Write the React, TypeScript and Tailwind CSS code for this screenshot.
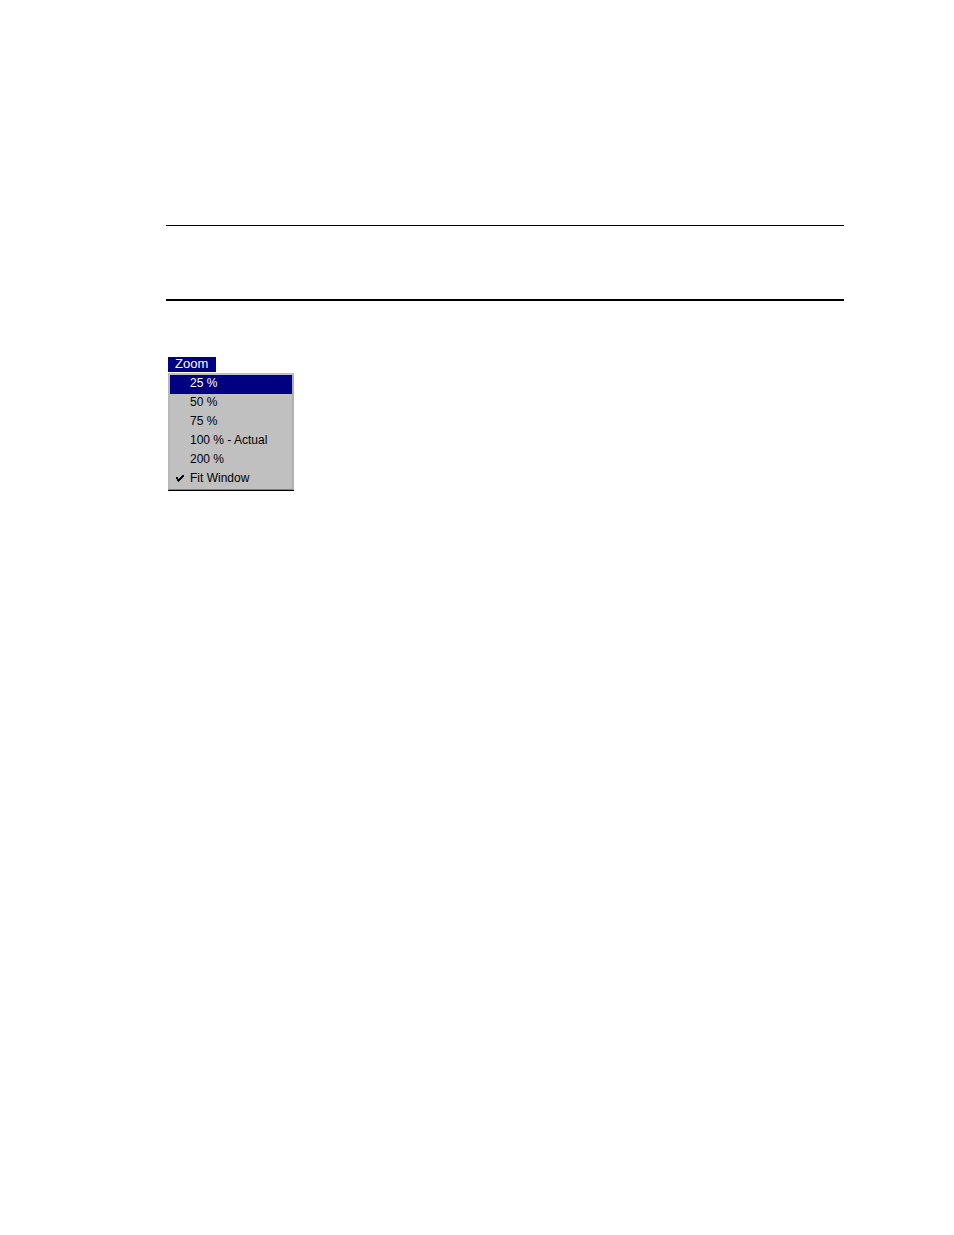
import { useState } from "react";

const levels = ["25 %", "50 %", "75 %", "100 % - Actual", "200 %", "Fit Window"];

function CheckMark() {
  return (
    <svg width="8" height="7" viewBox="0 0 8 7" shapeRendering="crispEdges" aria-hidden="true">
      <path d="M0 2h1v2h-1z M1 2h1v4h-1z M2 4h1v3h-1z M3 3h1v3h-1z M4 2h1v3h-1z M5 1h1v3h-1z M6 0h1v3h-1z M7 0h1v2h-1z" fill="#000" />
    </svg>
  );
}

export default function App() {
  const [checked, setChecked] = useState("Fit Window");
  const [active, setActive] = useState("25 %");

  return (
    <main className="min-h-screen bg-white pt-[225px] pr-[110px] pl-[166px] font-['Liberation_Sans',Arial,sans-serif] text-xs text-black">
      <header className="h-[76px] border-t border-b-2 border-black" />
      <section className="mt-14 ml-0.5 flex flex-col items-start">
        <button type="button" className="flex h-[15px] items-start bg-[#000080] pr-2 pl-[7px] text-[13px] leading-[13px] text-white">
          Zoom
        </button>
        <div className="mt-px w-[126px] border-b border-black">
          <ul
            role="menu"
            aria-label="Zoom"
            className="border-t-2 border-r-2 border-b border-l-2 border-t-[#c0c0c0] border-r-[#b0b0b0] border-b-[#808080] border-l-[#b8b8b8] bg-[#c0c0c0]"
          >
            {levels.map((level) => (
              <li key={level} role="none">
                <button
                  type="button"
                  role="menuitemradio"
                  aria-checked={checked === level}
                  onMouseEnter={() => setActive(level)}
                  onClick={() => setChecked(level)}
                  className={`flex h-[19px] w-full items-start text-left leading-[17px] whitespace-nowrap ${
                    active === level ? "bg-[#000080] text-white" : ""
                  }`}
                >
                  <span className="flex h-[17px] w-5 items-center justify-center">
                    {checked === level && <CheckMark />}
                  </span>
                  {level}
                </button>
              </li>
            ))}
          </ul>
        </div>
      </section>
    </main>
  );
}
